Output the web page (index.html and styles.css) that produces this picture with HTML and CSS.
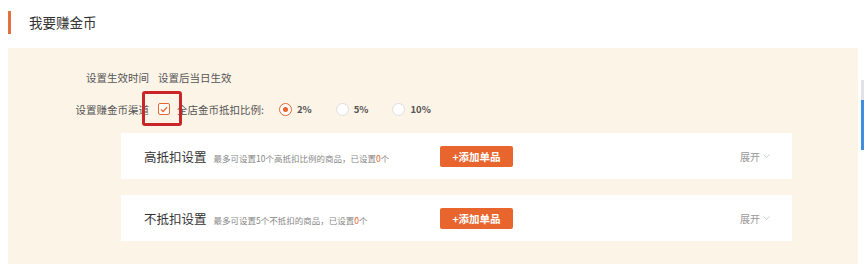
FILE: index.html
```html
<!DOCTYPE html>
<html lang="zh">
<head>
    <meta charset="UTF-8">
    <title>我要赚金币</title>
    <link rel="stylesheet" href="styles.css">
</head>
<body>
    <div class="title-bar">
        <span class="title-mark"></span>
        <h2>我要赚金币</h2>
    </div>

    <div class="panel">
        <div class="form-row">
            <label class="form-label">设置生效时间</label>
            <span class="form-value">设置后当日生效</span>
        </div>
        <div class="form-row">
            <label class="form-label">设置赚金币渠道</label>
            <span class="channel">
                <span class="check-box">
                    <svg width="8" height="7" viewBox="0 0 8 7"><path d="M1 3.6 L3.1 5.6 L7 1.2" fill="none" stroke="#e8652e" stroke-width="1.4"/></svg>
                </span>
                <span class="highlight"></span>
            </span>
            <span class="ratio-label">全店金币抵扣比例:</span>
            <span class="radio checked"><i></i>2%</span>
            <span class="radio"><i></i>5%</span>
            <span class="radio"><i></i>10%</span>
        </div>

        <div class="cards">
            <div class="card">
                <div class="card-info">
                    <span class="card-title">高抵扣设置</span>
                    <span class="card-tip">最多可设置10个高抵扣比例的商品，已设置<em>0</em>个</span>
                </div>
                <button class="add-btn">+添加单品</button>
                <span class="expand">展开 <svg width="7" height="4" viewBox="0 0 7 4"><path d="M0.5 0.5 L3.5 3.3 L6.5 0.5" fill="none" stroke="#c4c4c4" stroke-width="0.9"/></svg></span>
            </div>
            <div class="card">
                <div class="card-info">
                    <span class="card-title">不抵扣设置</span>
                    <span class="card-tip">最多可设置5个不抵扣的商品，已设置<em>0</em>个</span>
                </div>
                <button class="add-btn">+添加单品</button>
                <span class="expand">展开 <svg width="7" height="4" viewBox="0 0 7 4"><path d="M0.5 0.5 L3.5 3.3 L6.5 0.5" fill="none" stroke="#c4c4c4" stroke-width="0.9"/></svg></span>
            </div>
        </div>
    </div>

    <div class="scroll-hint"></div>
</body>
</html>
```

FILE: styles.css
```css
body {
    margin: 0;
    background: #fff;
    font-family: "Noto Sans CJK SC", "Noto Sans", sans-serif;
    color: #333;
    position: relative;
    height: 276px;
    overflow: hidden;
}

.title-bar {
    display: flex;
    align-items: center;
    height: 24px;
    padding: 10px 0 0 8px;
}
.title-mark {
    width: 3px;
    height: 23px;
    background: #e3703f;
}
.title-bar h2 {
    margin: 0 0 0 18px;
    font-size: 13.5px;
    font-weight: normal;
    color: #333;
}

.panel {
    margin: 14px 7px 0 8px;
    height: 216px;
    background: #fdf4e8;
    padding-top: 20px;
    box-sizing: border-box;
    font-size: 10.5px;
    color: #555;
}

.form-row {
    display: flex;
    align-items: center;
    height: 18px;
    margin-bottom: 14px;
}
.form-label {
    width: 141px;
    text-align: right;
    flex-shrink: 0;
}
.form-value {
    margin-left: 9px;
}

.channel {
    position: relative;
    margin-left: 9px;
    display: flex;
    align-items: center;
}
.check-box {
    width: 10px;
    height: 10px;
    border: 1px solid #e8652e;
    border-radius: 2px;
    background: #fff;
    display: flex;
    align-items: center;
    justify-content: center;
}
.highlight {
    position: absolute;
    left: -16px;
    top: -12px;
    width: 34px;
    height: 29px;
    border: 3px solid #c9262a;
    border-radius: 3px;
}
.ratio-label {
    margin-left: 7px;
    margin-right: 15px;
}

.radio {
    display: flex;
    align-items: center;
    font-weight: bold;
    color: #555;
    font-size: 9.5px;
    margin-right: 24px;
}
.radio i {
    width: 11px;
    height: 11px;
    border: 1px solid #ddd;
    border-radius: 50%;
    background: #fff;
    margin-right: 5px;
    box-sizing: content-box;
    position: relative;
}
.radio.checked i {
    border-color: #e8652e;
}
.radio.checked i::after {
    content: "";
    position: absolute;
    left: 3px;
    top: 3px;
    width: 5px;
    height: 5px;
    border-radius: 50%;
    background: #e8652e;
}

.cards {
    margin: 15px 0 0 113px;
    width: 671px;
    display: flex;
    flex-direction: column;
    gap: 16px;
}
.card {
    display: flex;
    align-items: center;
    height: 46px;
    background: #fff;
    padding: 0 22px 0 23px;
}
.card-info {
    width: 296px;
    display: flex;
    align-items: baseline;
}
.card-title {
    font-size: 12.5px;
    color: #333;
}
.card-tip {
    margin-left: 7px;
    font-size: 8.5px;
    color: #888;
}
.card-tip em {
    font-style: normal;
    color: #e8652e;
}
.add-btn {
    width: 73px;
    height: 21px;
    border: none;
    border-radius: 2px;
    background: #e8652e;
    color: #fff;
    font-family: inherit;
    font-size: 10.5px;
    font-weight: bold;
    padding: 0;
}
.expand {
    margin-left: auto;
    font-size: 10px;
    color: #999;
    display: flex;
    align-items: center;
    gap: 3px;
}

.scroll-hint {
    position: absolute;
    right: 1px;
    top: 80px;
    width: 3px;
    height: 70px;
    background: linear-gradient(#e2e2e8 0, #e2e2e8 20px, #3f8ee0 20px);
}
```
